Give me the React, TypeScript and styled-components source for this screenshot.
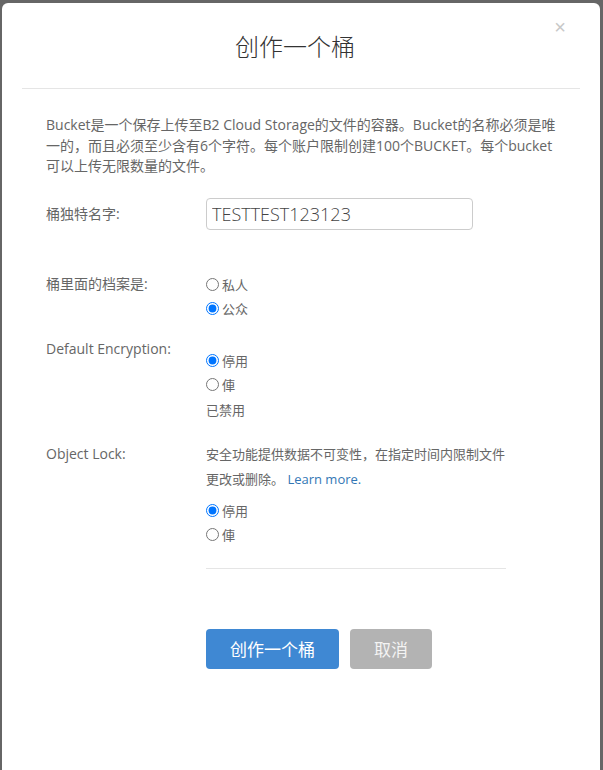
import React from 'react'
import styled, { createGlobalStyle } from 'styled-components'

const GlobalStyle = createGlobalStyle`
  html, body {
    margin: 0;
    padding: 0;
    background: #666666;
    overflow: hidden;
    height: 770px;
  }

  body {
    font-family: "Open Sans", "Noto Sans CJK SC", sans-serif;
  }
`

const Backdrop = styled.div`
  padding: 3px 3px 0 2px;
  height: 767px;
  overflow: hidden;
`

const Dialog = styled.div`
  position: relative;
  width: 598px;
  min-height: 820px;
  background: #ffffff;
  border-radius: 6px;
`

const Header = styled.div`
  margin: 0 20px;
  padding: 27px 0 24px;
  border-bottom: 1px solid #e5e5e5;
`

const Title = styled.h1`
  margin: 0;
  padding-right: 12px;
  font-size: 24px;
  line-height: 34px;
  font-weight: 300;
  color: #333333;
  text-align: center;
`

const Close = styled.button`
  position: absolute;
  top: 13px;
  right: 34px;
  border: 0;
  background: none;
  padding: 0;
  font-family: "Liberation Sans", sans-serif;
  font-size: 20px;
  line-height: 22px;
  color: #c8c8c8;
  cursor: pointer;
`

const Body = styled.div`
  padding: 26px 44px 0;
`

const Intro = styled.p`
  margin: 0 0 21px;
  font-size: 14px;
  line-height: 20.5px;
  color: #666666;
`

const Row = styled.div<{ $space?: number }>`
  display: grid;
  grid-template-columns: 160px 1fr;
  margin-bottom: ${(p) => p.$space ?? 20}px;
`

const Label = styled.label<{ $top?: number }>`
  padding-top: ${(p) => p.$top ?? 0}px;
  font-size: 14px;
  line-height: 20px;
  color: #666666;
`

const Control = styled.div<{ $top?: number }>`
  display: flex;
  flex-direction: column;
  padding-top: ${(p) => p.$top ?? 0}px;
`

const TextInput = styled.input`
  box-sizing: border-box;
  width: 267px;
  height: 32px;
  padding: 0 5px;
  border: 1px solid #cccccc;
  border-radius: 4px;
  font-family: "Open Sans", sans-serif;
  font-size: 18px;
  font-weight: 300;
  color: #444444;
  outline: none;
`

const Choice = styled.label`
  display: flex;
  align-items: center;
  height: 24px;
  font-size: 13px;
  color: #666666;

  input {
    width: 13px;
    height: 13px;
    margin: 0 3px 0 0;
  }
`

const Note = styled.div`
  margin-top: 3px;
  font-size: 13px;
  line-height: 20px;
  color: #666666;
`

const Description = styled.p`
  width: 300px;
  margin: 0 0 7px;
  font-size: 13px;
  line-height: 25px;
  color: #666666;
`

const LearnMore = styled.a`
  color: #3377b5;
  text-decoration: none;
`

const Divider = styled.hr`
  width: 300px;
  margin: 21px 0 0;
  border: 0;
  border-top: 1px solid #e5e5e5;
`

const Actions = styled.div`
  display: flex;
  gap: 11px;
  margin: 60px 0 0 160px;
`

const Button = styled.button<{ $primary?: boolean }>`
  height: 40px;
  padding: 0 24px;
  border: 0;
  border-radius: 4px;
  background: ${(p) => (p.$primary ? '#3f88d3' : '#b3b3b3')};
  color: ${(p) => (p.$primary ? '#ffffff' : '#f4f4f4')};
  font-family: "Open Sans", "Noto Sans CJK SC", sans-serif;
  font-size: 17px;
  cursor: pointer;
`

const Radio = ({ name, label, checked }: { name: string; label: string; checked?: boolean }) => (
  <Choice>
    <input type="radio" name={name} defaultChecked={checked} />
    {label}
  </Choice>
)

const App = () => {
  return (
    <Backdrop>
      <GlobalStyle />
      <Dialog>
        <Header>
          <Title>创作一个桶</Title>
        </Header>
        <Close aria-label="close">×</Close>

        <Body>
          <Intro>
            Bucket是一个保存上传至B2 Cloud Storage的文件的容器。Bucket的名称必须是唯一的，而且必须至少含有6个字符。每个账户限制创建100个BUCKET。每个bucket可以上传无限数量的文件。
          </Intro>

          <Row $space={43}>
            <Label $top={6}>桶独特名字:</Label>
            <Control>
              <TextInput defaultValue="TESTTEST123123" />
            </Control>
          </Row>

          <Row $space={18}>
            <Label $top={1}>桶里面的档案是:</Label>
            <Control>
              <Radio name="privacy" label="私人" />
              <Radio name="privacy" label="公众" checked />
            </Control>
          </Row>

          <Row $space={22}>
            <Label>Default Encryption:</Label>
            <Control $top={10}>
              <Radio name="encryption" label="停用" checked />
              <Radio name="encryption" label="俥" />
              <Note>已禁用</Note>
            </Control>
          </Row>

          <Row $space={0}>
            <Label $top={2}>Object Lock:</Label>
            <Control>
              <Description>
                安全功能提供数据不可变性，在指定时间内限制文件更改或删除。&nbsp;
                <LearnMore href="#">Learn more.</LearnMore>
              </Description>
              <Radio name="lock" label="停用" checked />
              <Radio name="lock" label="俥" />
              <Divider />
            </Control>
          </Row>

          <Actions>
            <Button $primary>创作一个桶</Button>
            <Button>取消</Button>
          </Actions>
        </Body>
      </Dialog>
    </Backdrop>
  )
}

export default App
